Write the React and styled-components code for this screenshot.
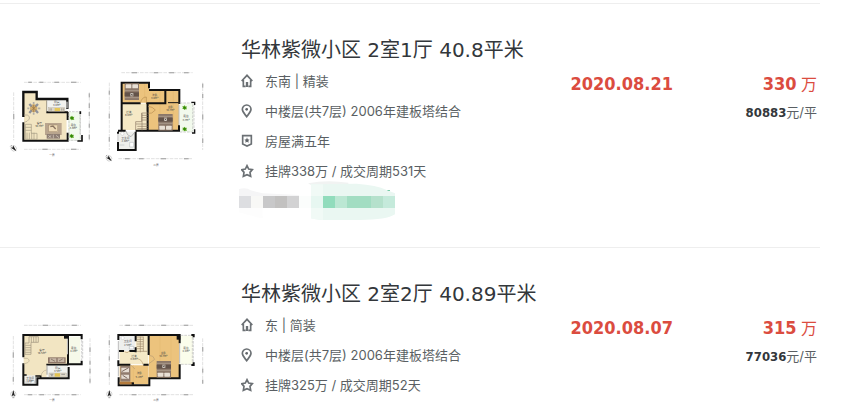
import React from 'react';
import styled, { createGlobalStyle } from 'styled-components';

const deals = [
  {
    id: 1,
    title: '华林紫微小区 2室1厅 40.8平米',
    facts: [
      { icon: 'home', text: '东南 | 精装' },
      { icon: 'pin', text: '中楼层(共7层) 2006年建板塔结合' },
      { icon: 'badge', text: '房屋满五年' },
      { icon: 'star', text: '挂牌338万 / 成交周期531天' },
    ],
    date: '2020.08.21',
    total: '330',
    unit: '80883',
    agent: true,
    plans: [PlanLower, PlanUpper],
  },
  {
    id: 2,
    title: '华林紫微小区 2室2厅 40.89平米',
    facts: [
      { icon: 'home', text: '东 | 简装' },
      { icon: 'pin', text: '中楼层(共7层) 2006年建板塔结合' },
      { icon: 'star', text: '挂牌325万 / 成交周期52天' },
    ],
    date: '2020.08.07',
    total: '315',
    unit: '77036',
    agent: false,
    plans: [PlanStudio, PlanLoft],
  },
];

function App() {
  return (
    <>
      <GlobalStyle />
      <List>
        {deals.map((deal) => (
          <Deal key={deal.id} deal={deal} />
        ))}
      </List>
    </>
  );
}

function Deal({ deal }) {
  const [First, Second] = deal.plans;
  return (
    <Item>
      <Plans>
        <First />
        <Second />
      </Plans>
      <Info>
        <Title>{deal.title}</Title>
        {deal.facts.map((fact) => (
          <Fact key={fact.icon}>
            <Icon name={fact.icon} />
            {fact.text}
          </Fact>
        ))}
        {deal.agent && <Mosaic />}
      </Info>
      <DealDate>{deal.date}</DealDate>
      <Price>
        <Total>
          <b>{deal.total}</b> 万
        </Total>
        <Unit>
          <b>{deal.unit}</b>元/平
        </Unit>
      </Price>
    </Item>
  );
}

function Icon({ name }) {
  return (
    <IconSvg viewBox="0 0 42 42">
      {name === 'home' && (
        <>
          <path d="M2 21 L18 4 L34 21 M7 18 V37 H14 M29 18 V37 H22" />
          <path d="M18 24 V39" strokeWidth="7" />
        </>
      )}
      {name === 'pin' && (
        <>
          <path d="M17 38 C11 30 4 24 4 16 A13 13 0 0 1 30 16 C30 24 23 30 17 38 Z" />
          <circle cx="17" cy="16" r="4" fill="#5f6468" stroke="none" />
        </>
      )}
      {name === 'badge' && (
        <>
          <path d="M5 5 H31 V30 L18 36 L5 30 Z" />
          <path
            d="M18 10 L20 16 L26 17 L22 20 L23 26 L18 23 L13 26 L14 20 L10 17 L16 16 Z"
            fill="#5f6468"
            stroke="none"
          />
        </>
      )}
      {name === 'star' && (
        <path d="M18 5 L23 15 L34 17 L27 25 L29 37 L18 32 L7 37 L9 25 L2 17 L13 15 Z" />
      )}
    </IconSvg>
  );
}

// censored agent line
function Mosaic() {
  return (
    <MosaicSvg viewBox="27 168 468 117" aria-hidden="true">
      <path d="M27 192 Q50 186 62 196 L98 205 L207 210 V213 H27 Z" fill="#f5f5f6" />
      <path d="M27 248 H98 V280 Q50 270 27 262 Z" fill="#fdfdfd" />
      <path d="M234 175 Q290 163 355 173 V180 H243 Z" fill="#f1f3f2" />
      <path
        d="M243 178 L380 176 Q440 180 470 195 L495 205 V268 Q470 285 390 285 H279 Q255 284 243 280 Z"
        fill="#eaf7f2"
      />
      <path d="M243 178 H279 V285 Q255 284 243 280 Z" fill="#f1faf6" />
      <path d="M471 196 H480 V198 H474 Z" fill="#4bbd8c" />
      <g shapeRendering="crispEdges">
        <rect x="27" y="213" width="36" height="36" fill="#dddee1" />
        <rect x="63" y="213" width="36" height="36" fill="#f8f8f6" />
        <rect x="99" y="213" width="36" height="36" fill="#c8c8c9" />
        <rect x="135" y="213" width="36" height="36" fill="#c2c1c0" />
        <rect x="171" y="213" width="36" height="36" fill="#d2d2d3" />
        <rect x="207" y="213" width="36" height="36" fill="#fbfdfc" />
        <rect x="243" y="213" width="36" height="36" fill="#e7f7f1" />
        <rect x="279" y="213" width="36" height="36" fill="#91dcbc" />
        <rect x="315" y="213" width="36" height="36" fill="#bbe7d3" />
        <rect x="351" y="213" width="72" height="36" fill="#a2ddc2" />
        <rect x="423" y="213" width="36" height="36" fill="#b5e1cc" />
        <rect x="459" y="213" width="36" height="36" fill="#c5eadb" />
      </g>
    </MosaicSvg>
  );
}

// dimension line running along one side of a plan
function Ruler({ d, marks = [], vertical }) {
  return (
    <g>
      <path d={d} stroke="#c4c4c4" strokeWidth="1.5" strokeDasharray="11 3" fill="none" />
      {marks.map(([x, y, w]) => (
        <rect
          key={`${x}-${y}`}
          x={vertical ? x - 2 : x - w / 2}
          y={vertical ? y - w / 2 : y - 2}
          width={vertical ? 4 : w}
          height={vertical ? w : 4}
          fill="#b0b0b0"
        />
      ))}
    </g>
  );
}

function Bed({ x, y, flip }) {
  return (
    <g transform={`translate(${x} ${y})${flip ? ' translate(0 50) scale(1 -1)' : ''}`}>
      <rect width="43" height="50" fill="#8b7769" />
      <rect y="11" width="43" height="12" fill="#63534a" />
      <path d="M0 28 H43 M0 7 H43" stroke="#b8a99a" strokeWidth="2" />
      <rect x="3" y="35" width="17" height="12" rx="2" fill="#e8dfd4" />
      <rect x="23" y="35" width="17" height="12" rx="2" fill="#e8dfd4" />
      <rect x="17" y="11" width="9" height="10" fill="#d7cec4" />
      <path d="M19 13 L24 19 M24 13 L19 19" stroke="#3c342f" strokeWidth="2" />
    </g>
  );
}

function Compass({ x, y, turn = 0 }) {
  return (
    <g transform={`translate(${x} ${y}) rotate(${turn})`}>
      <circle r="8" fill="none" stroke="#aaa" strokeWidth="1.5" />
      <path d="M0 -12 L5 7 L0 4 L-5 7 Z" fill="#222" />
      <path d="M-3 11 H3" stroke="#777" strokeWidth="2" />
    </g>
  );
}

function Plant({ x, y }) {
  return (
    <g transform={`translate(${x} ${y})`}>
      <path d="M0 -7 L3 -3 L7 -4 L5 1 L7 5 L2 5 L-1 7 L-3 4 L-7 4 L-5 0 L-7 -4 L-3 -4 Z" fill="#54a51b" />
      <circle r="3" fill="#2e8009" />
    </g>
  );
}

function PlanLower() {
  return (
    <PlanSvg viewBox="24 0 288 330" $width={96}>
      <path d="M72 98 H110 V118 H200 V241 H72 Z" fill="#f2e5c2" />
      <rect x="141" y="119" width="60" height="35" fill="#f2f2ef" />
      <rect x="203" y="156" width="38" height="86" fill="#f2faed" />
      <path d="M70 171 V96 H110 V117 H202 V147" fill="none" stroke="#111" strokeWidth="7" />
      <path d="M70 187 V242 H203 V218 M203 156 V180 M139 157 H204" fill="none" stroke="#111" strokeWidth="6" />
      <path d="M140 121 V155" stroke="#77736b" strokeWidth="2" />
      <path d="M205 155 H241 V241 H205 M207 160 V238 M240 159 V223" stroke="#bbb" strokeWidth="2" strokeDasharray="8 3" fill="none" />
      <path d="M241 154 V162 M232 243 H246 V225" stroke="#111" strokeWidth="5" fill="none" />
      <path d="M201 125 V145 M202 182 V216" stroke="#fff" strokeWidth="3" />
      <ellipse cx="101" cy="145" rx="11" ry="12" fill="#d2ae70" />
      <path d="M88 132 L95 139 M114 132 L107 139 M88 159 L95 151 M114 159 L107 151" stroke="#8f929c" strokeWidth="7" />
      <path d="M94 139 L108 151 M108 139 L94 151 M101 134 V157" stroke="#9c7443" strokeWidth="2" />
      <path d="M82 145 H88 M114 145 H121 M101 126 V132 M101 158 V164" stroke="#b1ada5" strokeWidth="5" />
      <rect x="145" y="143" width="49" height="11" fill="#ddd6c7" stroke="#aaa190" />
      <path d="M150 145 V152 M154 145 V152 M185 145 V152 M190 145 V152" stroke="#8f8b85" strokeWidth="2" />
      <rect x="164" y="144" width="16" height="9" fill="#e6c758" />
      <path d="M72 165 H82 Q91 169 88 177 Q82 186 72 187" fill="none" stroke="#aaa28f" strokeWidth="2" />
      <path d="M76 193 H94 V220 H111 V238 H76 Z M76 202 H94 M76 211 H94 M81 218 V238 M88 218 V238 M95 218 V238 M102 218 V238" fill="none" stroke="#a39a84" strokeWidth="2" />
      <rect x="135" y="189" width="50" height="36" fill="#b9a58e" />
      <rect x="146" y="195" width="27" height="20" fill="#efdbb7" stroke="#8d7357" />
      <path d="M151 200 L159 198 L167 207" stroke="#8b7561" strokeWidth="4" fill="none" />
      <path d="M140 222 H180 V236 H140 Z" fill="#8d7d73" />
      <path d="M145 226 L154 233 M154 226 L145 233 M168 226 L177 233 M160 224 V235" stroke="#ddd2c5" strokeWidth="2" />
      <Plant x={216} y={174} />
      <Plant x={215} y={228} />
      <PlanText x="118" y="191">客厅</PlanText>
      <PlanText x="118" y="200">16.7m²</PlanText>
      <PlanText x="170" y="130">厨房</PlanText>
      <PlanText x="170" y="139">3.0m²</PlanText>
      <PlanText x="220" y="197">露台</PlanText>
      <PlanText x="220" y="206">3.8m²</PlanText>
      <Ruler d="M72 67 H242" marks={[[90, 67, 11], [124, 67, 12], [170, 67, 14], [221, 67, 16]]} />
      <Ruler d="M72 268 H242" marks={[[135, 268, 16], [221, 268, 16]]} />
      <Ruler vertical d="M41 97 V241" marks={[[41, 170, 16]]} />
      <Ruler vertical d="M268 97 V241" marks={[[268, 106, 12], [268, 137, 14], [268, 162, 12], [268, 197, 12], [268, 231, 14]]} />
      <Compass x={41} y={265} turn={135} />
      <PlanText x="156" y="287">一层</PlanText>
    </PlanSvg>
  );
}

function PlanUpper() {
  return (
    <PlanSvg viewBox="12 0 312 330" $width={104}>
      <path d="M65 70 H147 V91 H237 V212 H145 V128 H65 Z" fill="#ecc37d" />
      <path d="M65 131 H143 V210 H65 Z" fill="#f5e9c6" />
      <rect x="57" y="215" width="48" height="54" fill="#eeefec" />
      <rect x="239" y="130" width="42" height="86" fill="#f2faed" />
      <path d="M180 92 V211 M220 92 V211 M88 70 V127 M134 70 V127" stroke="#dfb067" />
      <path d="M147 85 V68 H65 V212 M147 90 H238 V132 M63 130 H122 M138 130 H196 V91" fill="none" stroke="#111" strokeWidth="6" />
      <path d="M143 131 V212 H237 V196 M107 212 H145 M54 212 H77 M107 215 V270 H54 V246 M54 215 V221" fill="none" stroke="#111" strokeWidth="6" />
      <path d="M142 135 V154 M204 128 H236" stroke="#111" strokeWidth="3" />
      <path d="M237 135 V195 M54 222 V245" stroke="#bbb" strokeWidth="3" />
      <path d="M239 129 H282 V216 H240 M278 133 V213" fill="none" stroke="#bbb" strokeWidth="2" strokeDasharray="8 3" />
      <path d="M274 127 H284 V135 M276 219 H284 V208" fill="none" stroke="#111" strokeWidth="4" />
      <Bed x={74} y={70} flip />
      <Bed x={175} y={162} />
      <path d="M107 211 V185 H125 V159 H143 M108 192 H143 M112 199 H143 M112 206 H143 M126 166 H143 M126 173 H143 M126 180 H143 M126 160 V211" fill="none" stroke="#8c7963" strokeWidth="2" />
      <path d="M121 130 Q125 111 139 111 V131 M144 139 Q158 140 166 150 Q155 163 145 160" fill="none" stroke="#b68d50" strokeWidth="2" />
      <path d="M78 213 Q80 227 93 230 L105 216" fill="none" stroke="#999" strokeWidth="2" />
      <circle cx="67" cy="221" r="5" fill="#fff" stroke="#aaa" />
      <path d="M58 255 H73 M89 247 H101 V261 H89 Z" stroke="#bcc1c2" fill="#fff" strokeWidth="2" />
      <Plant x={254} y={143} />
      <Plant x={254} y={207} />
      <PlanText x="164" y="107">次卧</PlanText>
      <PlanText x="164" y="117">3.6m²</PlanText>
      <PlanText x="211" y="144">主卧</PlanText>
      <PlanText x="211" y="153">10.7m²</PlanText>
      <PlanText x="86" y="160">过道</PlanText>
      <PlanText x="86" y="169">8.0m²</PlanText>
      <PlanText x="76" y="236">卫生间</PlanText>
      <PlanText x="76" y="245">2.6m²</PlanText>
      <PlanText x="258" y="172">露台</PlanText>
      <PlanText x="258" y="182">3.7m²</PlanText>
      <Ruler d="M64 38 H278" marks={[[103, 38, 16], [168, 38, 14], [215, 38, 15], [259, 38, 14]]} />
      <Ruler d="M55 296 H278" marks={[[82, 296, 14], [124, 296, 14], [190, 296, 16], [259, 296, 14]]} />
      <Ruler vertical d="M28 68 V270" marks={[[28, 98, 12], [28, 168, 14], [28, 238, 14]]} />
      <Ruler vertical d="M308 68 V270" marks={[[308, 77, 12], [308, 108, 12], [308, 171, 16], [308, 242, 14]]} />
      <Compass x={27} y={295} turn={135} />
      <PlanText x="168" y="317">二层</PlanText>
    </PlanSvg>
  );
}

function PlanStudio() {
  return (
    <PlanSvg viewBox="24 -33 288 330" $width={96}>
      <path d="M71 61 H202 V150 H140 V187 H71 Z" fill="#f2e5c2" />
      <rect x="204" y="65" width="37" height="82" fill="#f6f9e9" />
      <rect x="142" y="150" width="61" height="40" fill="#f1f2ef" />
      <rect x="72" y="181" width="37" height="27" fill="#eeeeea" />
      <path d="M70 127 V60 H245 V73 M70 145 V209 H112 V190 H206 V156 M204 60 V148 H245 V137" fill="none" stroke="#111" strokeWidth="6" />
      <path d="M139 149 H205 M106 183 H122 V190 M72 180 H80" stroke="#111" strokeWidth="5" fill="none" />
      <rect x="192" y="61" width="12" height="10" fill="#111" />
      <path d="M141 153 V179 M107 185 V206" stroke="#777" strokeWidth="2" />
      <path d="M202 71 V118" stroke="#ddd" strokeWidth="3" />
      <path d="M245 75 V135 M248 78 V132" stroke="#bbb" strokeWidth="2" strokeDasharray="8 3" />
      <path d="M75 118 V84 H87 V65 H115 V82 H93 V118 Z M76 91 H93 M76 98 H93 M76 105 H93 M76 112 H93 M94 65 V82 M101 65 V82 M108 65 V82" fill="none" stroke="#9d937d" strokeWidth="2" />
      <path d="M71 130 H82 Q92 136 83 143 L71 147 M123 183 Q126 167 140 165" fill="none" stroke="#b8ac92" strokeWidth="2" />
      <rect x="144" y="127" width="53" height="18" fill="#8d7668" />
      <path d="M149 130 H169 V141 H149 Z M173 130 H193 V141 H173 Z" fill="#c6b6a5" />
      <path d="M153 132 L165 139 M177 138 L188 132" stroke="#6e5c50" strokeWidth="2" />
      <rect x="147" y="174" width="52" height="12" fill="#ded8c9" stroke="#a39c8f" />
      <rect x="164" y="175" width="16" height="10" fill="#e2c250" />
      <path d="M151 178 H160 M184 178 H195 M153 182 H158" stroke="#777" strokeWidth="2" />
      <path d="M76 201 H87 M93 197 H103 V205 H93 Z" stroke="#b7bcc0" fill="#fff" strokeWidth="2" />
      <PlanText x="126" y="108">客厅</PlanText>
      <PlanText x="126" y="117">16.5m²</PlanText>
      <PlanText x="221" y="102">露台</PlanText>
      <PlanText x="221" y="111">4.2m²</PlanText>
      <PlanText x="173" y="161">厨房</PlanText>
      <PlanText x="173" y="170">3.5m²</PlanText>
      <PlanText x="90" y="191">卫生间</PlanText>
      <PlanText x="90" y="200">1.9m²</PlanText>
      <Ruler d="M72 31 H242" marks={[[136, 31, 16], [223, 31, 15]]} />
      <Ruler d="M72 239 H242" marks={[[90, 239, 14], [125, 239, 14], [171, 239, 14], [222, 239, 14]]} />
      <Ruler vertical d="M40 63 V209" marks={[[40, 120, 16], [40, 193, 14]]} />
      <Ruler vertical d="M270 70 V209" marks={[[270, 104, 14], [270, 143, 12], [270, 168, 14], [270, 197, 12]]} />
      <Compass x={40} y={237} />
      <PlanText x="156" y="257">一层</PlanText>
    </PlanSvg>
  );
}

function PlanLoft() {
  return (
    <PlanSvg viewBox="12 -33 312 330" $width={104}>
      <rect x="57" y="62" width="48" height="46" fill="#eeefed" />
      <path d="M59 109 H107 V62 H145 V148 H59 Z" fill="#f5e9c6" />
      <path d="M59 151 H146 V208 H59 Z M147 61 H238 V189 H147 Z" fill="#ecc37d" />
      <rect x="241" y="62" width="38" height="86" fill="#fbfdec" />
      <path d="M180 62 V188 M213 62 V188 M100 150 V208" stroke="#dfb067" />
      <path d="M55 75 V60 H239 V85 M239 148 V190 H148 V211 H56 V187 M55 136 V154 M146 60 V120 M107 60 V79 M107 97 V112 M57 108 H72 M88 108 H109 M56 149 H91 M130 149 H146" fill="none" stroke="#111" strokeWidth="6" />
      <path d="M55 78 V132 M55 156 V184 M239 87 V145" stroke="#bbb" strokeWidth="3" />
      <path d="M242 61 H280 V148 H243 M277 66 V143" fill="none" stroke="#bbb" strokeWidth="2" strokeDasharray="8 3" />
      <path d="M274 60 H281 V67 M274 150 H281 V142" fill="none" stroke="#111" strokeWidth="6" />
      <rect x="230" y="61" width="11" height="13" fill="#111" />
      <path d="M110 66 H130 M110 73 H130 M110 80 H130 M110 87 H130 M110 94 H130 M110 101 H130 M111 109 H142 M130 65 V109 M121 65 V112" fill="none" stroke="#9d876a" strokeWidth="2" />
      <path d="M73 108 Q81 118 88 108 M129 149 Q126 132 110 131 M147 121 Q161 121 164 133 L147 146 M92 150 L105 162" fill="none" stroke="#b99d72" strokeWidth="2" />
      <Bed x={170} y={138} />
      <rect x="61" y="153" width="30" height="47" fill="#907b6e" />
      <path d="M64 158 H87 V172 H64 Z M64 179 H87 V191 H64 Z" fill="#e5dcd3" />
      <path d="M65 170 L86 158 M68 181 L82 190" stroke="#806c62" strokeWidth="3" />
      <rect x="59" y="201" width="38" height="7" fill="#b47b3d" />
      <rect x="95" y="202" width="7" height="7" fill="#111" />
      <circle cx="68" cy="69" r="5" fill="#fff" stroke="#aaa" />
      <path d="M88 94 H101 V102 H88 Z" fill="#fff" stroke="#b7bcc0" strokeWidth="2" />
      <PlanText x="83" y="82">卫生间</PlanText>
      <PlanText x="83" y="92">2.5m²</PlanText>
      <PlanText x="102" y="126">过道</PlanText>
      <PlanText x="102" y="136">3.8m²</PlanText>
      <PlanText x="190" y="117">主卧</PlanText>
      <PlanText x="190" y="127">10.7m²</PlanText>
      <PlanText x="118" y="178">次卧</PlanText>
      <PlanText x="118" y="188">5.2m²</PlanText>
      <PlanText x="258" y="102">露台</PlanText>
      <PlanText x="258" y="112">4.4m²</PlanText>
      <Ruler d="M58 31 H279" marks={[[83, 31, 14], [125, 31, 14], [191, 31, 15], [258, 31, 14]]} />
      <Ruler d="M58 239 H279" marks={[[102, 239, 14], [191, 239, 15], [258, 239, 14]]} />
      <Ruler vertical d="M28 60 V210" marks={[[28, 83, 14], [28, 130, 12], [28, 179, 14]]} />
      <Ruler vertical d="M308 70 V210" marks={[[308, 103, 14], [308, 167, 12], [308, 200, 12]]} />
      <Compass x={28} y={237} />
      <PlanText x="168" y="259">二层</PlanText>
    </PlanSvg>
  );
}

const GlobalStyle = createGlobalStyle`
  *, *::before, *::after {
    margin: 0;
    padding: 0;
    box-sizing: border-box;
  }

  body {
    background: #fff;
    font-family: Inter, "Noto Sans CJK SC", sans-serif;
    color: #5a5f63;
  }
`;

const List = styled.ul`
  list-style: none;
  margin: 3px 36px 0 0;
  border-top: 1px solid #eee;
`;

const Item = styled.li`
  display: flex;
  align-items: flex-start;
  padding: 30px 3px 27px 8px;
  border-bottom: 1px solid #eee;

  &:last-child {
    padding-bottom: 0;
    border-bottom: none;
  }
`;

const Plans = styled.div`
  display: flex;
  flex-shrink: 0;
  padding-top: 26px;
`;

const PlanSvg = styled.svg`
  display: block;
  width: ${(props) => props.$width}px;
  height: 110px;
`;

const PlanText = styled.text`
  font-size: 8px;
  text-anchor: middle;
  fill: #444;
`;

const Info = styled.div`
  flex: 1;
  min-width: 0;
  padding-left: 33px;
`;

const Title = styled.h2`
  font-family: "DejaVu Sans", "Noto Sans CJK SC", sans-serif;
  font-size: 20px;
  font-weight: 400;
  line-height: 32px;
  color: #33373b;
  white-space: nowrap;
`;

const Fact = styled.p`
  display: flex;
  align-items: center;
  gap: 10px;
  font-size: 13px;
  line-height: 30px;
  white-space: nowrap;
`;

const IconSvg = styled.svg`
  flex-shrink: 0;
  width: 14px;
  height: 14px;
  fill: none;
  stroke: #6b7074;
  stroke-width: 5;
`;

const MosaicSvg = styled.svg`
  display: block;
  width: 156px;
  height: 39px;
  margin: -5px 0 0 -2px;
`;

const DealDate = styled.time`
  padding-top: 36px;
  font-family: "DejaVu Sans Condensed", "DejaVu Sans", sans-serif;
  font-size: 18px;
  font-weight: 700;
  line-height: 28px;
  color: #db4c3f;
`;

const Price = styled.div`
  width: 144px;
  padding-top: 36px;
  text-align: right;
  line-height: 28px;

  b {
    font-family: "DejaVu Sans Condensed", "DejaVu Sans", sans-serif;
  }
`;

const Total = styled.p`
  font-size: 16px;
  color: #db4c3f;

  b {
    font-size: 18px;
  }
`;

const Unit = styled.p`
  font-size: 13px;

  b {
    color: #33373b;
  }
`;

export default App;
